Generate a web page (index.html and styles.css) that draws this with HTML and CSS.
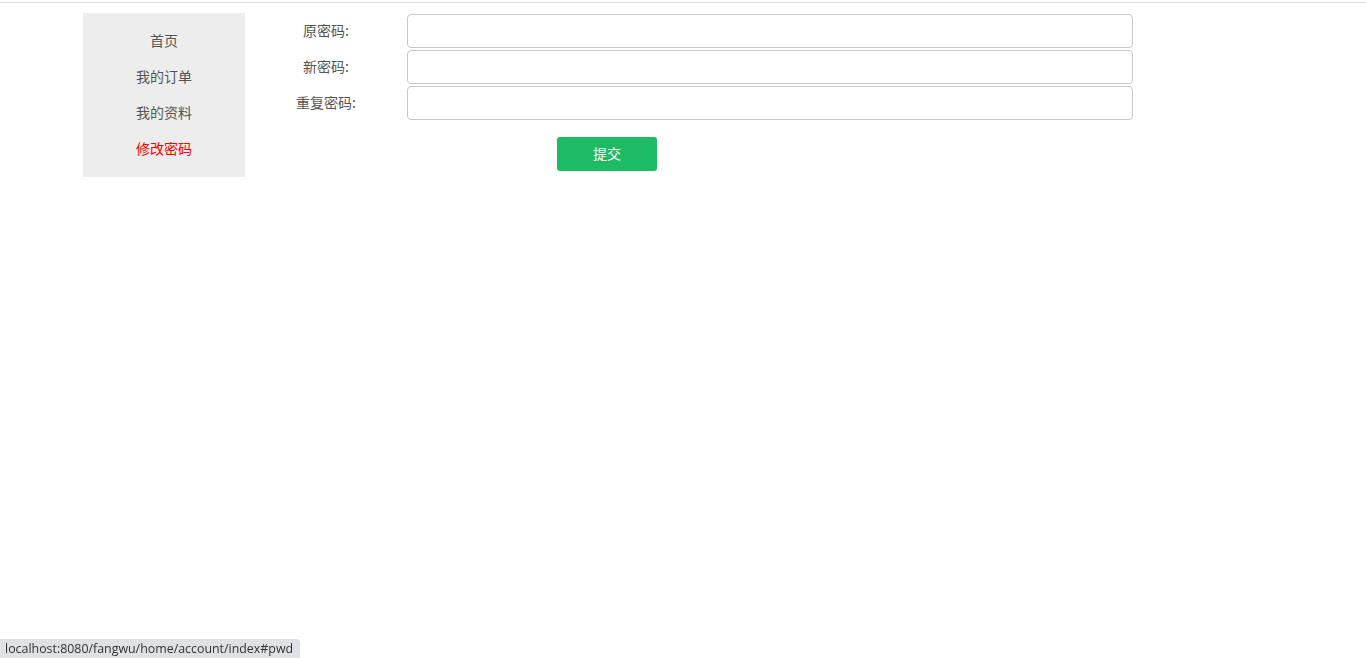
FILE: index.html
```html
<!DOCTYPE html>
<html lang="zh-CN">
<head>
<meta charset="utf-8">
<title>修改密码</title>
<link rel="stylesheet" href="styles.css">
</head>
<body>
<div class="topline"></div>
<div class="page">
  <ul class="side-menu">
    <li><a href="#">首页</a></li>
    <li><a href="#">我的订单</a></li>
    <li><a href="#">我的资料</a></li>
    <li><a href="#pwd" class="active">修改密码</a></li>
  </ul>
  <form class="pwd-form">
    <div class="row">
      <label class="label">原密码:</label>
      <input class="field" type="password">
    </div>
    <div class="row">
      <label class="label">新密码:</label>
      <input class="field" type="password">
    </div>
    <div class="row">
      <label class="label">重复密码:</label>
      <input class="field" type="password">
    </div>
    <div class="actions">
      <button type="button" class="submit">提交</button>
    </div>
  </form>
</div>
<div class="statusbar">localhost:8080/fangwu/home/account/index#pwd</div>
</body>
</html>
```
FILE: styles.css
```css
html, body {
  margin: 0;
  padding: 0;
  background: #fff;
}
body {
  font-family: "Noto Sans CJK SC", "Noto Sans", sans-serif;
  font-size: 14px;
  color: #555;
}
.topline {
  margin-top: 2px;
  height: 1px;
  background: #dddde5;
}
.page {
  display: flex;
  align-items: flex-start;
  padding-left: 83px;
  padding-top: 10px;
}
.side-menu {
  list-style: none;
  margin: 0;
  padding: 9px 0 11px;
  width: 162px;
  background: #ededed;
}
.side-menu li {
  height: 36px;
  display: flex;
  align-items: center;
  justify-content: center;
}
.side-menu a {
  color: #555;
  text-decoration: none;
  line-height: 20px;
}
.side-menu a.active {
  color: #ff0000;
}
.pwd-form {
  display: flex;
  flex-direction: column;
  padding-top: 1px;
}
.row {
  display: flex;
  align-items: center;
  margin-bottom: 2px;
}
.label {
  width: 162px;
  text-align: center;
  color: #555;
  line-height: 20px;
  padding-bottom: 2px;
}
.field {
  box-sizing: border-box;
  width: 726px;
  height: 34px;
  border: 1px solid #c8c8c8;
  border-radius: 4px;
  margin: 0;
  padding: 0 8px;
  background: #fff;
  outline: none;
}
.actions {
  padding-top: 15px;
  padding-left: 312px;
}
.submit {
  box-sizing: border-box;
  width: 100px;
  height: 34px;
  border: none;
  border-radius: 3px;
  background: #1dbb63;
  color: #fff;
  font-family: "Noto Sans CJK SC", "Noto Sans", sans-serif;
  font-size: 14px;
  line-height: 20px;
  padding: 0 0 2px;
  cursor: pointer;
}
.statusbar {
  position: fixed;
  left: 0;
  bottom: 0;
  height: 19px;
  line-height: 19px;
  padding: 0 7px 0 5px;
  background: #dee1e6;
  border-top-right-radius: 4px;
  color: #333;
  font-family: "Open Sans", "Liberation Sans", sans-serif;
  font-size: 12.4px;
  white-space: nowrap;
}
```
